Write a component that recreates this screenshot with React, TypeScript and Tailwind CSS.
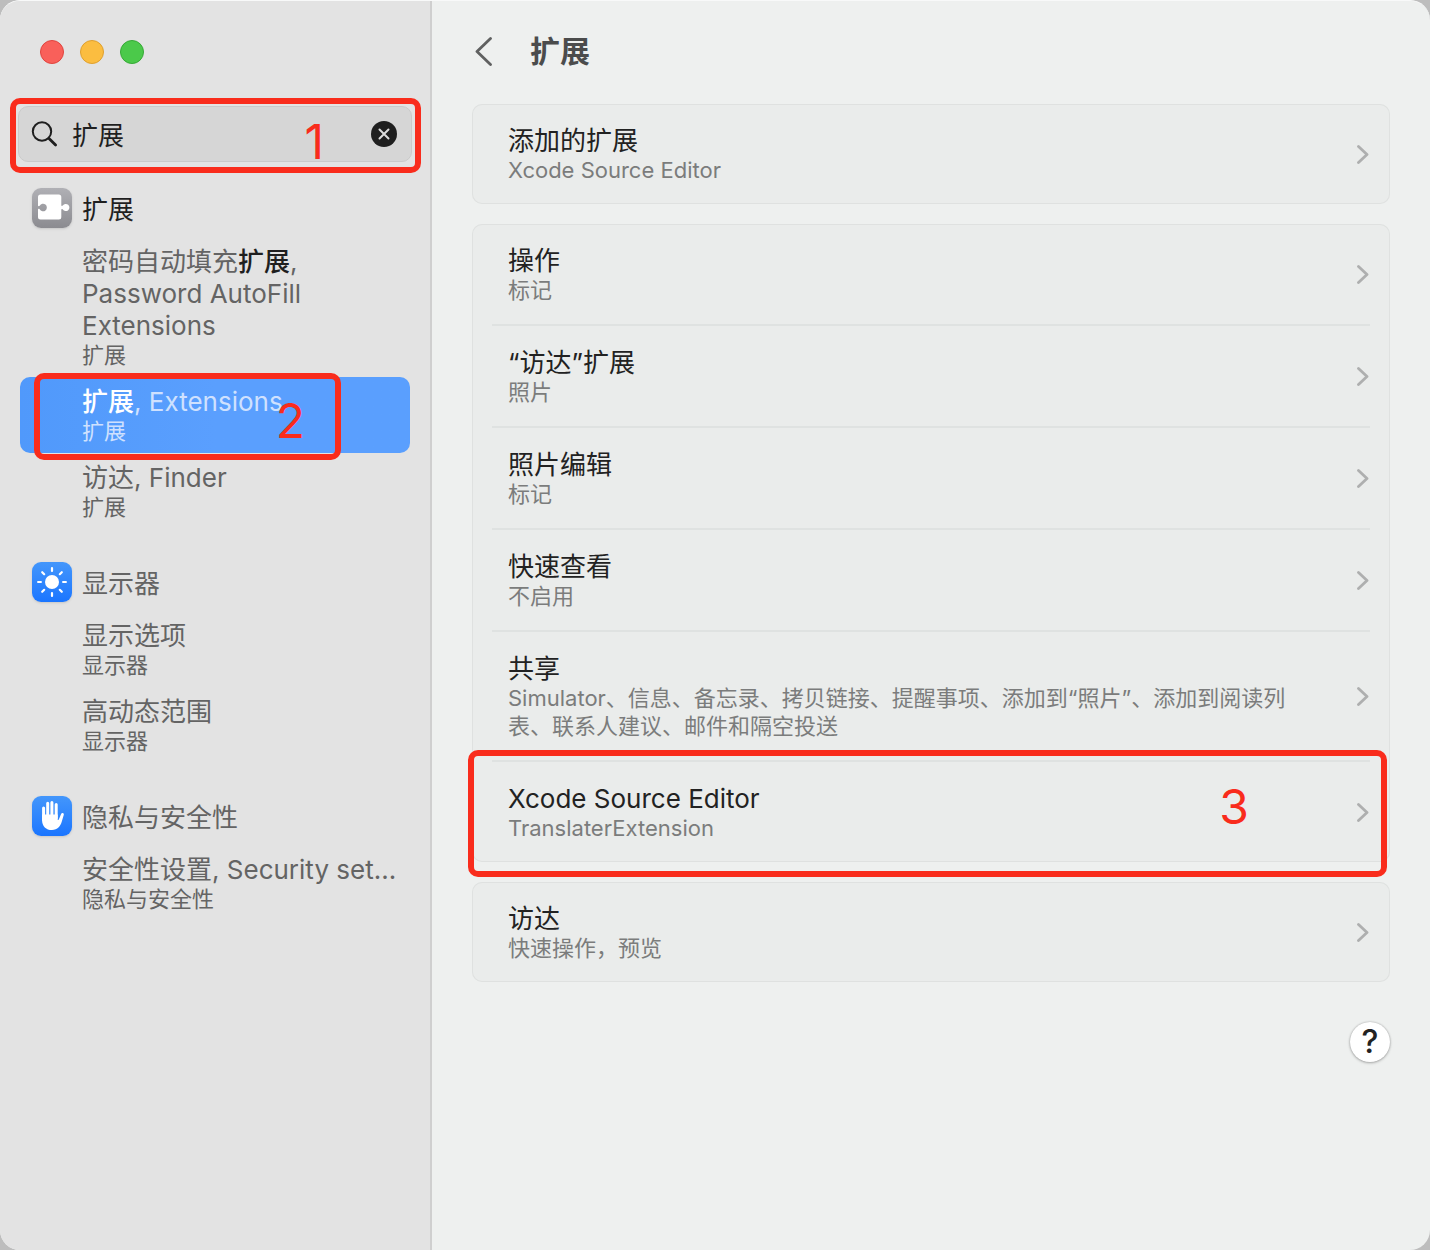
import type { ReactNode } from "react";

type Entry = { title: ReactNode; sub: string; selected?: boolean };

function Mark({ children }: { children: ReactNode }) {
  return <span className="font-medium text-[#1f1f1f]">{children}</span>;
}

function PuzzleIcon() {
  return (
    <svg viewBox="0 0 40 40" className="size-10" aria-hidden="true">
      <path
        fill="#fff"
        d="M8.500 6.500h18.300a2.500 2.500 0 0 1 2.500 2.500v8.200c0 .9.8 1 1.500.3a3.600 3.600 0 1 1 0 4c-.7-.7-1.500-.6-1.500.3V29a2.500 2.500 0 0 1-2.500 2.500H8.500A2.500 2.500 0 0 1 6 29v-7.400c0-.9.8-1 1.700-.3a3.800 3.800 0 1 0 0-3.600c-.9.7-1.700.6-1.700-.3V9a2.500 2.500 0 0 1 2.500-2.500z"
      />
    </svg>
  );
}

function SunIcon() {
  return (
    <svg viewBox="0 0 40 40" className="size-10" aria-hidden="true">
      <circle cx="20" cy="20" r="7" fill="#fff" />
      <path
        stroke="#fff"
        strokeWidth="2.200"
        strokeLinecap="round"
        d="M20 6.100v2.800M20 31.100v2.800M6.100 20h2.800M31.100 20h2.800M10.200 10.200l2 2M27.800 27.800l2 2M10.200 29.800l2-2M27.800 12.200l2-2"
      />
    </svg>
  );
}

function HandIcon() {
  return (
    <svg viewBox="0 0 40 40" className="size-10" aria-hidden="true">
      <path
        stroke="#fff"
        strokeWidth="3"
        strokeLinecap="round"
        d="M11.600 12v12M15.700 7.300V21M19.900 6.500V21M24.200 8.500V22"
      />
      <path
        fill="#fff"
        d="M10.100 18.500h15.600v5.200c.4.500.9.300 1.200-.4l2.300-5.500c.7-1.500 3-.8 2.600.9l-2 6.900c-1.300 4.800-4.300 8.400-9.800 8.400-6 0-9.900-3.700-9.900-9.800z"
      />
    </svg>
  );
}

const groups: { name: string; icon: ReactNode; tile: string; strong?: boolean; entries: Entry[] }[] = [
  {
    name: "扩展",
    icon: <PuzzleIcon />,
    tile: "from-[#b0b0b5] to-[#8b8b90]",
    strong: true,
    entries: [
      {
        title: (
          <>
            密码自动填充<Mark>扩展</Mark>, Password AutoFill Extensions
          </>
        ),
        sub: "扩展",
      },
      {
        title: (
          <>
            <span className="font-medium text-white">扩展</span>, Extensions
          </>
        ),
        sub: "扩展",
        selected: true,
      },
      { title: "访达, Finder", sub: "扩展" },
    ],
  },
  {
    name: "显示器",
    icon: <SunIcon />,
    tile: "from-[#4396fb] to-[#1a75ff]",
    entries: [
      { title: "显示选项", sub: "显示器" },
      { title: "高动态范围", sub: "显示器" },
    ],
  },
  {
    name: "隐私与安全性",
    icon: <HandIcon />,
    tile: "from-[#4396fb] to-[#1a75ff]",
    entries: [{ title: "安全性设置, Security set...", sub: "隐私与安全性" }],
  },
];

const cards: { title: string; sub: string; step?: string }[][] = [
  [{ title: "添加的扩展", sub: "Xcode Source Editor" }],
  [
    { title: "操作", sub: "标记" },
    { title: "“访达”扩展", sub: "照片" },
    { title: "照片编辑", sub: "标记" },
    { title: "快速查看", sub: "不启用" },
    {
      title: "共享",
      sub: "Simulator、信息、备忘录、拷贝链接、提醒事项、添加到“照片”、添加到阅读列表、联系人建议、邮件和隔空投送",
    },
    { title: "Xcode Source Editor", sub: "TranslaterExtension", step: "3" },
  ],
  [{ title: "访达", sub: "快速操作，预览" }],
];

function Callout({ step, frame, digit }: { step: string; frame: string; digit: string }) {
  return (
    <span
      className={`pointer-events-none absolute z-10 rounded-[10px] border-6 border-[#f92c1c] text-5xl font-normal text-[#f92c1c] ${frame}`}
    >
      <span className={`absolute leading-none ${digit}`}>{step}</span>
    </span>
  );
}

function Chevron() {
  return (
    <svg viewBox="0 0 12 20" className="h-5 w-3 shrink-0" fill="none" aria-hidden="true">
      <path d="M1.500 2.500L10 10.500L1.500 18.500" stroke="#aeafaf" strokeWidth="2.800" strokeLinecap="round" strokeLinejoin="round" />
    </svg>
  );
}

function Sidebar() {
  return (
    <aside className="w-[432px] shrink-0 border-r-2 border-[#cfcfcf] bg-[#e3e3e3] pt-[39px]">
      <div className="flex gap-4 pl-10">
        <button aria-label="关闭" className="size-6 rounded-full border border-[#e0443e] bg-[#f9605a]" />
        <button aria-label="最小化" className="size-6 rounded-full border border-[#dfa02f] bg-[#fbbd40]" />
        <button aria-label="缩放" className="size-6 rounded-full border border-[#36a936] bg-[#4bc94a]" />
      </div>

      <div className="relative mr-[18px] ml-[18px] mt-[42px] flex h-14 items-center rounded-[10px] border border-[#cacaca] bg-[#d6d6d6] pr-3.5 pl-3">
        <svg viewBox="0 0 28 28" className="size-7 shrink-0" fill="none" stroke="#1f1f1f" strokeLinecap="round" aria-hidden="true">
          <circle cx="11" cy="11.500" r="9.200" strokeWidth="2" />
          <path d="M18 18.500l6.600 6.600" strokeWidth="2.800" />
        </svg>
        <input
          aria-label="搜索"
          defaultValue="扩展"
          className="ml-[13px] h-[52px] min-w-0 flex-1 self-start bg-transparent text-[26px] text-[#1f1f1f] outline-none"
        />
        <button aria-label="清除" className="size-[26px] shrink-0 rounded-full bg-[#1f1f1f]">
          <svg viewBox="0 0 26 26" className="size-[26px]" fill="none" stroke="#dcdcdc" strokeWidth="2" strokeLinecap="round" aria-hidden="true">
            <path d="M8.500 8.500l9 9M17.500 8.500l-9 9" />
          </svg>
        </button>
        <Callout step="1" frame="-left-[9px] -right-2.5 -top-[9px] -bottom-3" digit="right-[91px] top-[14px]" />
      </div>

      <nav className="mt-[26px] flex flex-col gap-[33px] pr-5 pl-5">
        {groups.map((g) => (
          <section key={g.name}>
            <h2
              className={`mb-[5px] flex items-start gap-2.5 pl-3 text-[26px] leading-[44px] ${g.strong ? "text-[#1f1f1f]" : "text-[#646464]"}`}
            >
              <span className={`rounded-[9px] bg-linear-to-b shadow-sm ${g.tile}`}>{g.icon}</span>
              {g.name}
            </h2>
            {g.entries.map((e, i) => (
              <a
                key={i}
                href="#"
                className={`relative block rounded-[10px] py-[9px] pr-3 pl-[62px] ${e.selected ? "bg-linear-to-r from-[#5099fb] to-[#5a9ffe] to-50% text-[#cfe1fe]" : "text-[#646464]"}`}
              >
                <span className="block text-[26px] leading-8">{e.title}</span>
                <span className="block text-[22px] leading-[26px]">{e.sub}</span>
                {e.selected && (
                  <Callout step="2" frame="-top-1 -bottom-[7px] left-3.5 right-[69px]" digit="right-[30px] top-[18px]" />
                )}
              </a>
            ))}
          </section>
        ))}
      </nav>
    </aside>
  );
}

export default function App() {
  return (
    <div className="min-h-screen bg-[#bdbdbd] font-['Inter','Noto_Sans_CJK_SC',sans-serif]">
      <div className="flex min-h-screen overflow-hidden rounded-[20px] border-t border-[#f8f9f9] bg-[#eef0ef]">
        <Sidebar />
        <main className="min-w-0 flex-1 px-10">
          <header className="mb-1 flex h-[99px] items-center gap-9">
            <button aria-label="返回" className="flex w-[22px] justify-center">
              <svg viewBox="0 0 20 30" className="h-[30px] w-5" fill="none" aria-hidden="true">
                <path d="M17.500 2.500L4 15.500L17.500 28.500" stroke="#606161" strokeWidth="2.800" strokeLinecap="round" strokeLinejoin="round" />
              </svg>
            </button>
            <h1 className="text-3xl font-bold text-[#4b4c4c]">扩展</h1>
          </header>

          <div className="flex flex-col gap-5">
            {cards.map((rows, c) => (
              <section key={c} className="rounded-[10px] bg-[#eaeceb] inset-ring inset-ring-[#dfe1e0]">
                {rows.map((r, i) => (
                  <div key={r.title}>
                    {i > 0 && <div className="mx-5 h-0.5 bg-[#dfe2e1]" />}
                    <button className="relative flex w-full items-center gap-10 pr-[21px] pl-9 text-left">
                      <span className="min-w-0 flex-1 pt-[22px] pb-5">
                        <span className="block text-[26px] leading-[30px] text-[#222]">{r.title}</span>
                        <span className="block text-[22px] leading-7 text-[#7b7c7c]">{r.sub}</span>
                      </span>
                      <Chevron />
                      {r.step && (
                        <Callout step={r.step} frame="-top-3 -bottom-[15px] -left-1 right-[3px]" digit="right-[132px] top-[27px]" />
                      )}
                    </button>
                  </div>
                ))}
              </section>
            ))}
          </div>

          <div className="mt-10 flex justify-end">
            <button
              aria-label="帮助"
              className="size-10 rounded-full bg-white text-[32px] leading-10 font-medium text-[#222] shadow-[0_0_2px_rgba(0,0,0,0.25),0_1px_3px_rgba(0,0,0,0.25)]"
            >
              ?
            </button>
          </div>
        </main>
      </div>
    </div>
  );
}
